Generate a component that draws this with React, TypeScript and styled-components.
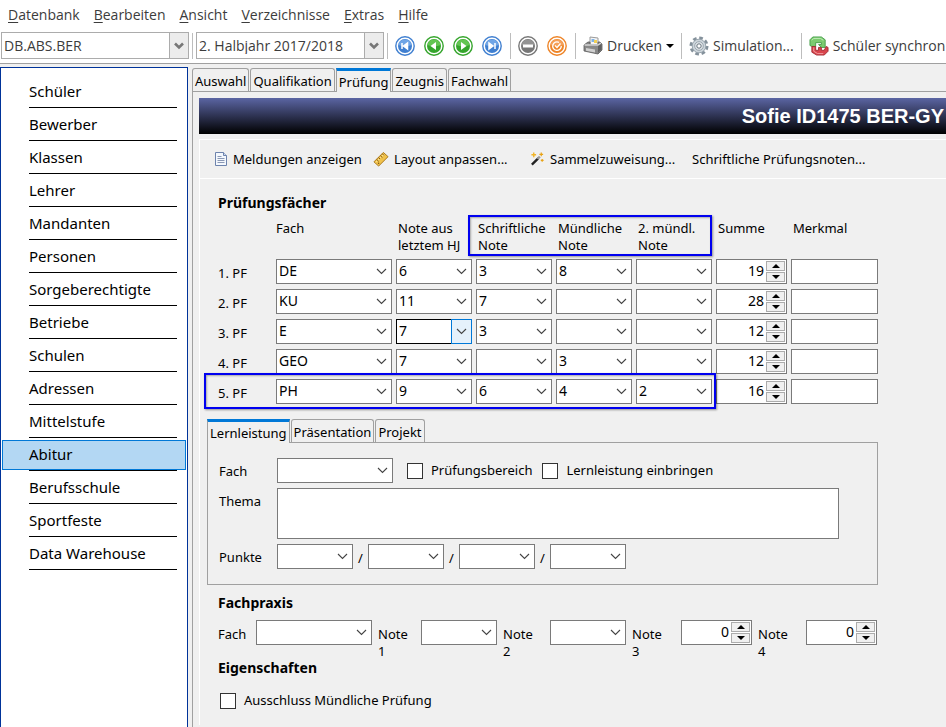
import React, { useState } from "react";
import styled, { createGlobalStyle, css } from "styled-components";

const GlobalStyle = createGlobalStyle`
  * { box-sizing: border-box; }
  html, body { margin: 0; background: #f0f0f0; overflow-x: hidden; }
  body, button, input, select, textarea {
    font-family: "Noto Sans", "Open Sans", sans-serif;
    font-size: 13px;
    line-height: 17px;
    color: #000;
  }
  button, input, select, textarea { margin: 0; padding: 0; border-radius: 0; outline: none; }
`;

const Shell = styled.div`
  display: flex;
  flex-direction: column;
  min-height: 100vh;
  overflow: hidden;
`;

/* ---------- menu and main toolbar ---------- */

const MenuBar = styled.nav`
  display: flex;
  gap: 14px;
  height: 31px;
  padding: 0 8px 2px;
  background: #fff;
`;

const MenuItem = styled.button`
  border: 0;
  background: none;
  font-family: "Open Sans", sans-serif;
  font-size: 14px;
  color: #3c3c3c;
  white-space: nowrap;
  u { text-underline-offset: 2px; }
`;

const ToolBar = styled.div`
  display: flex;
  align-items: center;
  height: 33px;
  padding: 0 0 3px 1px;
  background: #fff;
  border-bottom: 1px solid #a0a0a0;
  overflow: hidden;
`;

const Separator = styled.span<{ $spaced?: boolean }>`
  flex: none;
  width: 1px;
  height: 26px;
  margin: ${(p) => (p.$spaced ? "0 3px" : "0")};
  background: #bdbdbd;
`;

const ToolCombo = styled.span`
  display: grid;
  grid-template-columns: 1fr 19px;
  flex: none;
  width: 188px;
  height: 27px;
  border: 1px solid #acacac;
  background: #fff;
  select {
    grid-area: 1 / 1 / 2 / 3;
    appearance: none;
    border: 0;
    background: none;
    padding-left: 2px;
    font-family: "Open Sans", sans-serif;
    font-size: 14px;
    color: #3c3c3c;
  }
`;

const ComboArrow = styled.span`
  grid-area: 1 / 2;
  display: grid;
  place-items: center;
  border-left: 1px solid #acacac;
  background: #ececec;
  pointer-events: none;
`;

const IconGroup = styled.div<{ $tight?: boolean }>`
  display: flex;
  flex: none;
  gap: 9px;
  padding: 0 8px 0 ${(p) => (p.$tight ? 4 : 7)}px;
`;

const IconButton = styled.button`
  display: block;
  width: 20px;
  height: 20px;
  border: 0;
  background: none;
  svg { display: block; }
`;

const ToolButton = styled.button`
  display: flex;
  align-items: center;
  flex: none;
  gap: 4px;
  padding: 0 7px;
  border: 0;
  background: none;
  font-family: "Open Sans", sans-serif;
  font-size: 14px;
  color: #3c3c3c;
  white-space: nowrap;
`;

/* ---------- page frame ---------- */

const Body = styled.div`
  display: flex;
  flex: 1;
  padding-top: 3px;
`;

const Sidebar = styled.ul`
  flex: none;
  width: 188px;
  margin: 0 4px 0 0;
  padding: 7px 1px 0;
  list-style: none;
  background: #fff;
  border: 1px solid #003399;
  border-bottom: 0;
`;

const SideItem = styled.li`
  padding-top: 2px;
  &::after {
    content: "";
    display: block;
    height: 1px;
    margin: 0 9px 0 27px;
    background: #000;
  }
`;

const SideButton = styled.button<{ $active: boolean }>`
  display: block;
  width: 100%;
  height: 30px;
  padding: 0 0 1px 26px;
  text-align: left;
  font-size: 15px;
  border: 1px solid ${(p) => (p.$active ? "#0078d7" : "transparent")};
  background: ${(p) => (p.$active ? "#b3d7f3" : "none")};
`;

const Main = styled.main`
  flex: 1;
  display: flex;
  flex-direction: column;
  min-width: 0;
`;

const Tabs = styled.div`
  display: flex;
  align-items: flex-end;
  gap: 1px;
  height: 24px;
`;

const Tab = styled.button<{ $active?: boolean }>`
  flex: none;
  height: 23px;
  padding: 3px 2px 0;
  border: 1px solid #a0a0a0;
  border-bottom: 0;
  border-radius: 3px 3px 0 0;
  background: #f0f0f0;
  white-space: nowrap;
  ${(p) =>
    p.$active &&
    css`
      height: 24px;
      margin-bottom: -1px;
      padding-top: 1px;
      border-top: 3px solid #0078d7;
      border-radius: 0;
      z-index: 1;
    `}
`;

const Page = styled.div`
  flex: 1;
  border: 1px solid #a0a0a0;
  border-width: 1px 0 0 1px;
  padding: 6px 0 0 6px;
`;

const Banner = styled.h1`
  display: flex;
  justify-content: flex-end;
  align-items: center;
  height: 36px;
  margin: 0;
  padding-right: 2px;
  font: bold 20px "Liberation Sans", sans-serif;
  color: #fff;
  background: linear-gradient(#5b65a3, #000);
  white-space: nowrap;
`;

const Sheet = styled.div`
  margin-top: 5px;
  border-left: 1px solid #fff;
  border-top: 1px solid #fff;
`;

const ActionBar = styled.div`
  display: grid;
  grid-template-columns: 159px 157px 162px auto;
  align-items: center;
  height: 39px;
  padding-left: 14px;
  border-bottom: 1px solid #fff;
`;

const Action = styled.button`
  display: flex;
  align-items: center;
  gap: 5px;
  border: 0;
  background: none;
  white-space: nowrap;
`;

const Form = styled.form`
  width: max-content;
  padding: 15px 4px 16px 7px;
`;

const Section = styled.section`
  padding-left: 11px;
`;

const Heading = styled.h2<{ $spaced?: boolean }>`
  margin: 0;
  padding-top: ${(p) => (p.$spaced ? 9 : 0)}px;
  font-size: 14px;
  line-height: 17px;
  font-weight: bold;
`;

/* ---------- fields ---------- */

const GradeRow = styled.div<{ $head?: boolean }>`
  position: relative;
  display: grid;
  grid-template-columns: 54px 116px repeat(4, 76px) 71px 87px;
  column-gap: 4px;
  margin-bottom: 5px;
  ${(p) => p.$head && css`margin: 9px 0 5px;`}
`;

const HeadCell = styled.span<{ $indent?: boolean }>`
  padding-left: ${(p) => (p.$indent ? 2 : 0)}px;
  white-space: pre-line;
`;

const HeadGroup = styled.div`
  position: relative;
  grid-column: span 3;
  display: grid;
  grid-template-columns: repeat(3, 76px);
  column-gap: 4px;
`;

const Highlight = styled.span<{ $row?: boolean }>`
  position: absolute;
  inset: ${(p) => (p.$row ? "-6px 162px -5px -14px" : "-5px 0 -2px -8px")};
  border: 2px solid #0000f0;
  box-shadow: 1px 1px 2px rgba(0, 0, 0, 0.4), inset 1px 1px 2px rgba(0, 0, 0, 0.3);
  pointer-events: none;
`;

const RowLabel = styled.span`
  align-self: end;
  line-height: 21px;
`;

const ComboBox = styled.span<{ $wide?: boolean; $focus?: boolean }>`
  display: inline-grid;
  grid-template-columns: 1fr 19px;
  flex: none;
  width: ${(p) => (p.$wide ? 116 : 76)}px;
  height: 25px;
  background: #fff;
  border: 1px solid ${(p) => (p.$focus ? "#000" : "#7a7a7a")};
  select {
    grid-area: 1 / 1 / 2 / 3;
    min-width: 0;
    appearance: none;
    border: 0;
    background: none;
    padding: 0 0 2px 2px;
    font-size: 14px;
  }
`;

const DropMark = styled.span<{ $focus?: boolean }>`
  grid-area: 1 / 2;
  display: grid;
  place-items: center;
  pointer-events: none;
  ${(p) =>
    p.$focus &&
    css`
      margin: -1px;
      border: 1px solid #0078d7;
      background: #e5f1fb;
    `}
`;

const SpinBox = styled.span`
  display: inline-flex;
  flex: none;
  width: 71px;
  height: 25px;
  padding: 1px;
  background: #fff;
  border: 1px solid #7a7a7a;
  input {
    flex: 1;
    min-width: 0;
    border: 0;
    padding: 0 2px 2px 0;
    text-align: right;
    background: none;
    font-size: 14px;
  }
`;

const SpinButtons = styled.span`
  display: grid;
  grid-template-rows: 10px 10px;
  gap: 1px;
  width: 19px;
`;

const SpinButton = styled.button`
  display: grid;
  place-items: center;
  border: 1px solid #acacac;
  background: #f0f0f0;
`;

const TextField = styled.input`
  width: 100%;
  height: 25px;
  border: 1px solid #7a7a7a;
  background: #fff;
`;

const TextArea = styled.textarea`
  display: block;
  width: 562px;
  height: 51px;
  resize: none;
  border: 1px solid #7a7a7a;
  background: #fff;
`;

const Check = styled.input`
  appearance: none;
  flex: none;
  width: 16px;
  height: 16px;
  border: 1px solid #333;
  background: #fff;
  &:checked { background: #0078d7; box-shadow: inset 0 0 0 3px #fff; }
`;

const CheckLabel = styled.label`
  display: flex;
  align-items: center;
  gap: 8px;
`;

const ExcludeRow = styled(CheckLabel)`
  padding: 16px 0 0 2px;
`;

const TabBox = styled.div`
  margin-top: 14px;
`;

const TabPanel = styled.div`
  width: 671px;
  padding: 15px 11px;
  border: 1px solid #a0a0a0;
`;

const PanelRow = styled.div<{ $last?: boolean }>`
  display: flex;
  margin-bottom: ${(p) => (p.$last ? 0 : 5)}px;
  > label:first-child { width: 58px; padding-top: 5px; }
`;

const Checks = styled.div`
  display: flex;
  align-items: center;
  gap: 10px;
  padding-left: 14px;
`;

const Slash = styled.span`
  width: 15px;
  padding-top: 6px;
  text-align: center;
`;

const PracticeRow = styled.div`
  display: grid;
  grid-template-columns: 32px 116px 37px 76px 41px 76px 43px 71px 42px 71px;
  gap: 0 6px;
  height: 39px;
  align-items: start;
  margin-top: 9px;
  label { padding-top: 6px; width: 33px; }
`;

/* ---------- icons ---------- */

const Chevron = () => (
  <svg width="11" height="7" viewBox="0 0 11 7" fill="none" stroke="#444" strokeWidth="1.1">
    <path d="M1 1l4.5 4.5L10 1" />
  </svg>
);

const Orb = ({ color, light, children }: { color: string; light: string; children: React.ReactNode }) => (
  <svg width="20" height="20" viewBox="0 0 20 20">
    <circle cx="10" cy="10" r="9.2" fill="#fff" stroke={color} strokeWidth="1.4" />
    <circle cx="10" cy="10" r="7" fill={color} />
    <path d="M3.4 9a6.7 6.7 0 0 1 13.2 0c-4 1.8-9 1.8-13.2 0z" fill={light} />
    {children}
  </svg>
);

const PrinterIcon = () => (
  <svg width="20" height="19" viewBox="0 0 20 19">
    <path d="M7 1l8 1v7H7z" fill="#f5f5f5" stroke="#9a9a9a" />
    <path d="M8.5 3h3v3h-3z" fill="#7fb2e5" />
    <path d="M11 4h3v3h-3z" fill="#f1cf55" />
    <path d="M1 9l4-3h2v3h8V6h2l2 2v6l-4 4L1 15z" fill="#888" stroke="#5a5a5a" strokeWidth=".8" />
    <path d="M1.5 9H15l3-2" fill="none" stroke="#d4d4d4" strokeWidth="1.4" />
    <path d="M3 12l9 1.5v3l-9-1.700z" fill="#d0d0d0" />
    <path d="M15 10v7l3.500-3.500V8z" fill="#606060" />
  </svg>
);

const GearIcon = () => (
  <svg width="20" height="20" viewBox="0 0 20 20">
    <circle cx="10" cy="10" r="8" fill="none" stroke="#84919b" strokeWidth="3" strokeDasharray="3.6 2.68" />
    <circle cx="10" cy="10" r="6.8" fill="#cdd5db" stroke="#9aa6af" />
    <circle cx="10" cy="10" r="4.3" fill="#e6eaed" stroke="#9aa6af" />
    <circle cx="10" cy="10" r="2.2" fill="#fff" stroke="#64717b" />
  </svg>
);

const SyncIcon = () => (
  <svg width="20" height="20" viewBox="0 0 21 21">
    <path d="M1 10V4l3-3h9l4 3v8h-4l-3-3h3V7H7v4H3z" fill="#7ccb70" stroke="#3f9a43" strokeWidth=".9" />
    <path d="M3 4.500L5 2.500h7l3 2" fill="none" stroke="#c4edba" />
    <path d="M20 12v4l-4 4H8l-5-3v-6h4v4h3v-3h3v3h3l2-4z" fill="#d9444c" stroke="#9c2830" strokeWidth=".9" />
    <path d="M5 12v4l4 2.500h6" fill="none" stroke="#f3a0a2" />
  </svg>
);

const PageIcon = () => (
  <svg width="14" height="16" viewBox="0 0 14 16">
    <path d="M1.5 1.5h8l3 3v10h-11z" fill="#f4f8fd" stroke="#6d83ad" />
    <path d="M9.5 1.5v3h3" fill="#cfdcf0" stroke="#6d83ad" />
    <path d="M3.5 5.5h4M3.5 7.5h7M3.5 9.5h7M3.5 11.5h7" stroke="#8a98b5" />
  </svg>
);

const RulerIcon = () => (
  <svg width="16" height="17" viewBox="0 0 17 17">
    <path d="M1 11L11 1l5 4.5-10 10z" fill="#f0c24b" stroke="#a87416" />
    <path d="M3 11.5L11.5 3" stroke="#fbe6a0" />
    <path d="M4 8.5l2 2M6 6.5L7.500 8M8 4.500l2 2M10 2.500L11.500 4" stroke="#7a500c" />
    <circle cx="6" cy="12.5" r=".8" fill="#7a500c" />
  </svg>
);

const WandIcon = () => (
  <svg width="15" height="16" viewBox="0 0 16 16">
    <path d="M2 14L9 7" stroke="#222" strokeWidth="2.5" />
    <path d="M8 8l2.5-2.5" stroke="#999" strokeWidth="2.5" />
    <path d="M4 1v5M1.5 3.5h5" stroke="#f0b429" strokeWidth="1.5" />
    <path d="M12 1v4M10 3h4M13 8v3M11.500 9.500h3" stroke="#e8a317" strokeWidth="1.3" />
  </svg>
);

const Triangle = ({ up }: { up?: boolean }) => (
  <svg width="8" height="4" viewBox="0 0 8 4">
    <path d={up ? "M0 4l4-4 4 4z" : "M0 0h8L4 4z"} fill="#000" />
  </svg>
);

/* ---------- composed controls ---------- */

const grades = Array.from({ length: 16 }, (_, i) => String(i));
const subjects = ["DE", "KU", "E", "GEO", "PH"];

function Combo({ id, label, value = "", wide, focus }: { id?: string; label?: string; value?: string; wide?: boolean; focus?: boolean }) {
  return (
    <ComboBox $wide={wide} $focus={focus}>
      <DropMark $focus={focus}><Chevron /></DropMark>
      <select id={id} aria-label={label} defaultValue={value}>
        <option value="" />
        {(wide ? subjects : grades).map((o) => <option key={o}>{o}</option>)}
      </select>
    </ComboBox>
  );
}

function Spin({ id, label, start }: { id?: string; label?: string; start: number }) {
  const [n, setN] = useState(start);
  return (
    <SpinBox>
      <input id={id} aria-label={label} value={n} onChange={(e) => setN(Number(e.target.value) || 0)} />
      <SpinButtons>
        <SpinButton type="button" aria-label="Erhöhen" onClick={() => setN(n + 1)}><Triangle up /></SpinButton>
        <SpinButton type="button" aria-label="Verringern" onClick={() => setN(n - 1)}><Triangle /></SpinButton>
      </SpinButtons>
    </SpinBox>
  );
}

function ToolSelect({ label, value }: { label: string; value: string }) {
  return (
    <ToolCombo>
      <ComboArrow>
        <svg width="10" height="8" viewBox="0 0 10 8" fill="none" stroke="#777" strokeWidth="2.6">
          <path d="M1 1.5l4 4 4-4" />
        </svg>
      </ComboArrow>
      <select aria-label={label}><option>{value}</option></select>
    </ToolCombo>
  );
}

const menu = ["Datenbank", "Bearbeiten", "Ansicht", "Verzeichnisse", "Extras", "Hilfe"];
const modules = [
  "Schüler", "Bewerber", "Klassen", "Lehrer", "Mandanten", "Personen", "Sorgeberechtigte", "Betriebe",
  "Schulen", "Adressen", "Mittelstufe", "Abitur", "Berufsschule", "Sportfeste", "Data Warehouse",
];
const tabs = ["Auswahl", "Qualifikation", "Prüfung", "Zeugnis", "Fachwahl"];
const exams = [
  { fach: "DE", hj: "6", s: "3", m: "8", m2: "", sum: 19 },
  { fach: "KU", hj: "11", s: "7", m: "", m2: "", sum: 28 },
  { fach: "E", hj: "7", s: "3", m: "", m2: "", sum: 12 },
  { fach: "GEO", hj: "7", s: "", m: "3", m2: "", sum: 12 },
  { fach: "PH", hj: "9", s: "6", m: "4", m2: "2", sum: 16 },
];

export default function App() {
  return (
    <Shell>
      <GlobalStyle />
      <MenuBar>
        {menu.map((m) => <MenuItem key={m}><u>{m[0]}</u>{m.slice(1)}</MenuItem>)}
      </MenuBar>
      <ToolBar>
        <ToolSelect label="Datenbank" value="DB.ABS.BER" />
        <Separator $spaced />
        <ToolSelect label="Zeitraum" value="2. Halbjahr 2017/2018" />
        <Separator $spaced />
        <IconGroup $tight>
          <IconButton aria-label="Erster"><Orb color="#3f7fd0" light="#6fa5e6"><path d="M7 7v6M12.5 7v6l-4-3z" fill="#fff" stroke="#fff" strokeWidth="1.5" /></Orb></IconButton>
          <IconButton aria-label="Zurück"><Orb color="#35a52c" light="#63c552"><path d="M12 6v8l-5.500-4z" fill="#fff" /></Orb></IconButton>
          <IconButton aria-label="Weiter"><Orb color="#35a52c" light="#63c552"><path d="M8 6v8l5.500-4z" fill="#fff" /></Orb></IconButton>
          <IconButton aria-label="Letzter"><Orb color="#3f7fd0" light="#6fa5e6"><path d="M13 7v6M7 7v6l4-3z" fill="#fff" stroke="#fff" strokeWidth="1.5" /></Orb></IconButton>
        </IconGroup>
        <Separator />
        <IconGroup>
          <IconButton aria-label="Entfernen"><Orb color="#777" light="#939393"><path d="M5 8.5h10v3H5z" fill="#fff" /></Orb></IconButton>
          <IconButton aria-label="Aktualisieren"><Orb color="#ee8427" light="#f5a059"><path d="M12 6.300A4.300 4.300 0 1 0 14.300 10M8 9.500l2 2 3.500-4" fill="none" stroke="#fff" strokeWidth="1.3" /></Orb></IconButton>
        </IconGroup>
        <Separator />
        <ToolButton><PrinterIcon />Drucken<Triangle /></ToolButton>
        <Separator />
        <ToolButton><GearIcon />Simulation...</ToolButton>
        <Separator />
        <ToolButton><SyncIcon />Schüler synchron</ToolButton>
      </ToolBar>
      <Body>
        <Sidebar>
          {modules.map((m) => (
            <SideItem key={m}><SideButton $active={m === "Abitur"}>{m}</SideButton></SideItem>
          ))}
        </Sidebar>
        <Main>
          <Tabs role="tablist">
            {tabs.map((t) => <Tab key={t} role="tab" aria-selected={t === "Prüfung"} $active={t === "Prüfung"}>{t}</Tab>)}
          </Tabs>
          <Page>
            <Banner>Sofie ID1475 BER-GY</Banner>
            <Sheet>
              <ActionBar>
                <Action><PageIcon />Meldungen anzeigen</Action>
                <Action><RulerIcon />Layout anpassen...</Action>
                <Action><WandIcon />Sammelzuweisung...</Action>
                <Action>Schriftliche Prüfungsnoten...</Action>
              </ActionBar>
              <Form onSubmit={(e) => e.preventDefault()}>
                <Section>
                  <Heading>Prüfungsfächer</Heading>
                  <GradeRow $head>
                    <span />
                    <HeadCell>Fach</HeadCell>
                    <HeadCell $indent>{"Note aus\nletztem HJ"}</HeadCell>
                    <HeadGroup>
                      <HeadCell $indent>{"Schriftliche\nNote"}</HeadCell>
                      <HeadCell $indent>{"Mündliche\nNote"}</HeadCell>
                      <HeadCell $indent>{"2. mündl.\nNote"}</HeadCell>
                      <Highlight />
                    </HeadGroup>
                    <HeadCell $indent>Summe</HeadCell>
                    <HeadCell $indent>Merkmal</HeadCell>
                  </GradeRow>
                  {exams.map((e, i) => (
                    <GradeRow key={e.fach}>
                      <RowLabel>{i + 1}. PF</RowLabel>
                      <Combo wide label={`Fach ${i + 1}. PF`} value={e.fach} />
                      <Combo label={`Note aus letztem HJ ${i + 1}. PF`} value={e.hj} focus={i === 2} />
                      <Combo label={`Schriftliche Note ${i + 1}. PF`} value={e.s} />
                      <Combo label={`Mündliche Note ${i + 1}. PF`} value={e.m} />
                      <Combo label={`2. mündl. Note ${i + 1}. PF`} value={e.m2} />
                      <Spin label={`Summe ${i + 1}. PF`} start={e.sum} />
                      <TextField aria-label={`Merkmal ${i + 1}. PF`} />
                      {i === 4 && <Highlight $row />}
                    </GradeRow>
                  ))}
                </Section>
                <TabBox>
                  <Tabs role="tablist">
                    <Tab type="button" role="tab" aria-selected $active>Lernleistung</Tab>
                    <Tab type="button" role="tab">Präsentation</Tab>
                    <Tab type="button" role="tab">Projekt</Tab>
                  </Tabs>
                  <TabPanel>
                    <PanelRow>
                      <label htmlFor="ll-fach">Fach</label>
                      <Combo wide id="ll-fach" />
                      <Checks>
                        <CheckLabel><Check type="checkbox" />Prüfungsbereich</CheckLabel>
                        <CheckLabel><Check type="checkbox" />Lernleistung einbringen</CheckLabel>
                      </Checks>
                    </PanelRow>
                    <PanelRow>
                      <label htmlFor="ll-thema">Thema</label>
                      <TextArea id="ll-thema" />
                    </PanelRow>
                    <PanelRow $last>
                      <label htmlFor="ll-punkte">Punkte</label>
                      <Combo id="ll-punkte" /><Slash>/</Slash>
                      <Combo label="Punkte 2" /><Slash>/</Slash>
                      <Combo label="Punkte 3" /><Slash>/</Slash>
                      <Combo label="Punkte 4" />
                    </PanelRow>
                  </TabPanel>
                </TabBox>
                <Section>
                  <Heading $spaced>Fachpraxis</Heading>
                  <PracticeRow>
                    <label htmlFor="fp-fach">Fach</label><Combo wide id="fp-fach" />
                    <label htmlFor="fp-1">Note 1</label><Combo id="fp-1" />
                    <label htmlFor="fp-2">Note 2</label><Combo id="fp-2" />
                    <label htmlFor="fp-3">Note 3</label><Spin id="fp-3" start={0} />
                    <label htmlFor="fp-4">Note 4</label><Spin id="fp-4" start={0} />
                  </PracticeRow>
                  <Heading>Eigenschaften</Heading>
                  <ExcludeRow><Check type="checkbox" />Ausschluss Mündliche Prüfung</ExcludeRow>
                </Section>
              </Form>
            </Sheet>
          </Page>
        </Main>
      </Body>
    </Shell>
  );
}
